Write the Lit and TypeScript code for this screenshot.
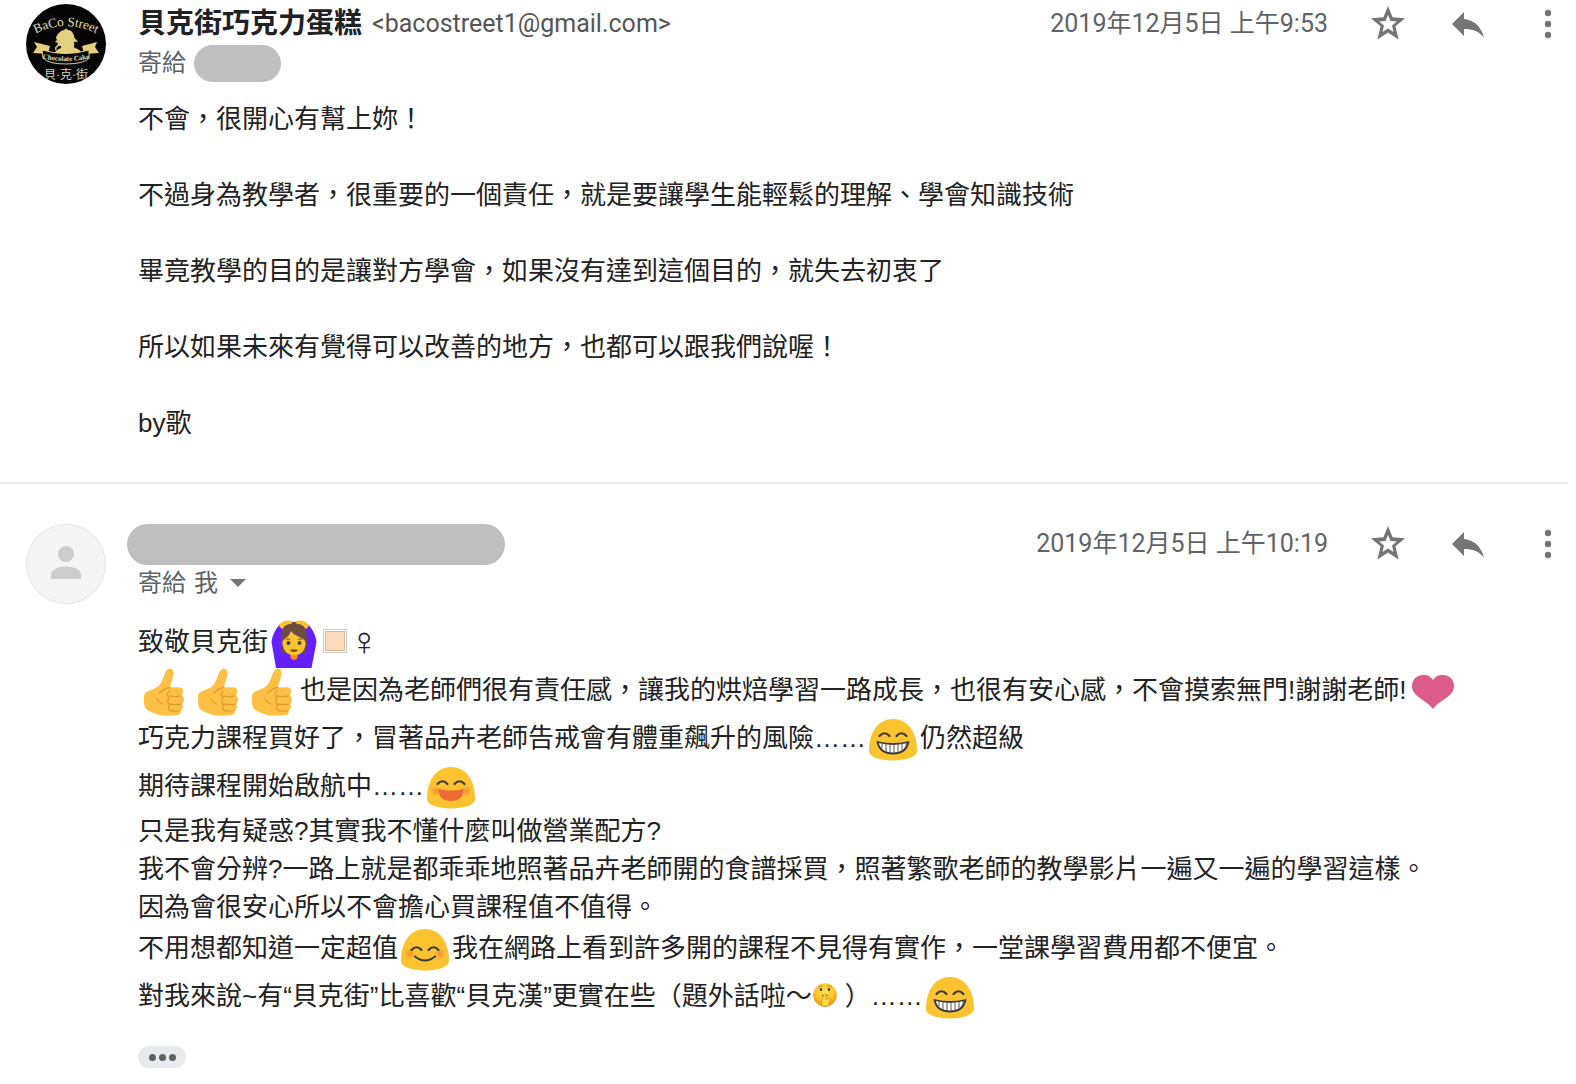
import { LitElement, html, css, svg, nothing, type TemplateResult } from "lit";
import { customElement, property } from "lit/decorators.js";

type EmojiName = "thumb" | "grin" | "laugh" | "blush" | "heart" | "woman" | "shush" | "skin";

const BLOB = svg`<path fill="#fcc331" d="M24 3C38 3 48 15 48 35C48 41 37 44.500 24 44.500S0 41 0 35C0 15 10 3 24 3Z"/>`;

const eyes = (y: number) => svg`
  <path fill="none" stroke="#3b3a35" stroke-width="2.200" stroke-linecap="round"
    d="M10.500 ${y + 3}Q15.500 ${y - 2.5} 20.500 ${y + 3}M27.500 ${y + 3}Q32.500 ${y - 2.5} 37.500 ${y + 3}"/>`;

const cheeks = (y: number) => svg`
  <defs><radialGradient id="c"><stop offset="0.200" stop-color="#f78c3a" stop-opacity="0.850"/><stop offset="1" stop-color="#f9a03a" stop-opacity="0"/></radialGradient></defs>
  <circle cx="9" cy=${y} r="6" fill="url(#c)"/><circle cx="39" cy=${y} r="6" fill="url(#c)"/>`;

const ART: Record<EmojiName, { label: string; art: TemplateResult<2> }> = {
  grin: {
    label: "😁",
    art: svg`${BLOB}${eyes(17)}
      <path d="M8.500 26Q24 30 39.500 26Q37 37.500 24 37.500T8.500 26Z" fill="#fff" stroke="#3b3a35" stroke-width="1.800" stroke-linejoin="round"/>
      <path d="M13 27.500V32M17 28V36M21 28V37M25 28V37M29 28V37M33 28V35M37 27V31" stroke="#55534c" stroke-width="1"/>`,
  },
  laugh: {
    label: "😄",
    art: svg`${BLOB}${cheeks(27)}${eyes(17)}
      <path d="M11.500 25Q24 28 36.500 25Q36.500 37 24 37T11.500 25Z" fill="#f06a35"/>`,
  },
  blush: {
    label: "😊",
    art: svg`${BLOB}${cheeks(28)}${eyes(21)}
      <path d="M14 30.500Q24 38.500 34 30.500" fill="none" stroke="#3b3a35" stroke-width="2" stroke-linecap="round"/>`,
  },
  heart: {
    label: "❤",
    art: svg`<path fill="#db5b8b" d="M24 12C21 7 16 6.500 12 7.200C6 8.300 3 13 3 18C3 29 18 32 24 41C30 32 45 29 45 18C45 13 42 8.300 36 7.200C32 6.500 27 7 24 12Z"/>`,
  },
  thumb: {
    label: "👍",
    art: svg`<path fill="#fcc046" d="M26.500 1.500C29.500-0.300 33 1.500 32.500 6C32 11 29.500 15 29 19.500L38.500 19.300C43 19.500 43 25.500 40.500 27.500C44 29 43.800 34.500 40.800 36C43 38 42 42 39.500 42.500C40.500 45.500 38.500 47.300 35 47.300C25 48 18.500 47.800 14 45.500C9 44 4.500 42 3.500 38C2.700 34 2.800 30 3.200 27C3.800 22.500 14 22 18.500 17C22.500 12 23 4 26.500 1.500Z"/>
      <path fill="none" stroke="#e59b2b" stroke-width="1.300" stroke-linecap="round" d="M18.500 25C23 21 25 20 29 19.500M39.500 27.800C36 29 31 28.500 28.500 28M40 36C36 37 32 36.500 29 36M39 42.500C36 43.500 33 43.300 29.500 42.500M28 23C25.500 26 26 28 28 29.500C26 32 26.500 35 28.500 36.500C27 39 27.500 41 29 42.500M16 31C17.500 34 19 35 22 36"/>`,
  },
  woman: {
    label: "🙆",
    art: svg`<path fill="#651fff" d="M8.500 4.500L12 9L10 24L15 31H31L35.500 24L34 9L37.500 4.500C42 10 45 16 45.500 22L40.500 48H5L0.500 22C1 16 4 10 8.500 4.500Z"/>
      <path fill="#6d4c41" d="M11.500 33C9.500 24 9.500 14 12 8C15 2.500 19 2 23 2S31 2.500 34 8C36.500 14 36.500 24 34.500 33Z"/>
      <path fill="#fcc331" d="M8 6C11 0 17-0.500 22 1.500L20 4C16 4 12.500 6 11 9ZM38 6C35 0 29-0.500 24 1.500L26 4C30 4 33.500 6 35 9Z"/>
      <path fill="#fb8c00" d="M19.500 31H26.500V38Q23 42 19.500 38Z"/>
      <path fill="#fcc331" d="M11.500 23C11 19 17 19 20 11C23 17 34.500 17 34.500 23C34.500 30.500 29.500 35.500 23 35.500S12 30.500 11.500 23Z"/>
      <circle cx="17.500" cy="23" r="2" fill="#444"/><circle cx="28.500" cy="23" r="2" fill="#444"/>
      <path fill="none" stroke="#6d4c41" d="M15 19.500Q17 18 19 19.500M27 19.500Q29 18 31 19.500"/>
      <path fill="#7a4b1e" d="M19 29.500H27Q26 32 23 32T19 29.500Z"/>`,
  },
  skin: {
    label: "🏻",
    art: svg`<rect x="1" y="1" width="46" height="46" fill="#fff" stroke="#ccc" stroke-width="2"/>
      <rect x="5" y="5" width="38" height="38" fill="#fadcbc" stroke="#e6b38f" stroke-width="2"/>`,
  },
  shush: {
    label: "🤫",
    art: svg`<defs><radialGradient id="s" cx="0.500" cy="0.350" r="0.650"><stop offset="0" stop-color="#ffe94f"/><stop offset="0.600" stop-color="#fdc52d"/><stop offset="1" stop-color="#ee8a14"/></radialGradient></defs>
      <circle cx="24" cy="24" r="23.500" fill="url(#s)"/>
      <path fill="none" stroke="#c98524" stroke-width="2" stroke-linecap="round" d="M11 8Q15 4 19 6M29 6Q34 4 38 8"/>
      <ellipse cx="16" cy="13" rx="2.400" ry="3.400" fill="#6b3a10"/><ellipse cx="32" cy="13" rx="2.400" ry="3.400" fill="#6b3a10"/>
      <path fill="none" stroke="#b06a18" stroke-width="2" stroke-linecap="round" d="M18 25Q24 22 30 25"/>
      <path fill="#ffd54a" stroke="#dd8a1c" stroke-width="1.500" d="M21 23Q23.500 19 26 23L27 33L34 29Q37 30 34 34L32 44Q26 49 18 46L17 36Q20 32 21 23Z"/>`,
  },
};

@customElement("mail-emoji")
export class MailEmoji extends LitElement {
  @property() name: EmojiName = "grin";

  static styles = css`
    :host { display: inline-block; width: 48px; height: 48px; margin: 0 3px; vertical-align: middle; }
    :host([small]) { width: 24px; height: 24px; margin: 0 8px 0 1px; vertical-align: -2px; }
    .art { display: block; width: 100%; height: 100%; }
  `;

  render() {
    const { label, art } = ART[this.name];
    return html`<svg class="art" viewBox="0 0 48 48" role="img" aria-label=${label}>${art}</svg>`;
  }
}

@customElement("mail-avatar")
export class MailAvatar extends LitElement {
  @property() kind: "brand" | "person" = "person";

  static styles = css`
    :host { display: block; flex: none; width: 80px; height: 80px; }
    .art { display: block; width: 100%; height: 100%; }
    .latin { font-family: "Liberation Serif", serif; fill: #e9dfb4; }
    .arc { font-size: 13px; }
    .ribbon { font-size: 7px; font-weight: 700; }
    .han { font-family: "Liberation Serif", "Noto Sans CJK TC", serif; font-size: 12px; fill: #d8d3b4; }
  `;

  render() {
    return this.kind === "brand" ? this.brand() : this.person();
  }

  private person() {
    return html`<svg class="art" viewBox="0 0 80 80" aria-hidden="true">
      <circle cx="40" cy="40" r="39.500" fill="#f5f5f5" stroke="#e4e4e4"/>
      <circle cx="40" cy="30" r="8" fill="#ccc"/>
      <path d="M25 55V51C25 45.500 32 42.500 40 42.500S55 45.500 55 51V55Z" fill="#ccc"/>
    </svg>`;
  }

  private brand() {
    return html`<svg class="art" viewBox="0 0 80 80" aria-hidden="true">
      <circle cx="40" cy="40" r="40" fill="#050505"/>
      <path id="top" fill="none" d="M5 32Q40 12 75 32"/>
      <text class="latin arc" text-anchor="middle"><textPath href="#top" startOffset="50%">BaCo Street</textPath></text>
      <path fill="#e3cf7d" d="M30 34C31 30 34 27 38 26L40 24.500L42 26C46 26 48 30 48.500 34L52 37.500L48 38C49 41 47 43 49 44C53 45 55 47 56 50H28C29 47 32 45 35 44L35 42L31 42L32 39L29 38L31 36Z"/>
      <path fill="none" stroke="#e3cf7d" stroke-width="1.500" d="M32 42Q29 43 30 46"/>
      <path fill="#e3cf7d" d="M8 38L24 42L22 50L7 49L11 43ZM71 38L56 42L58 50L73 49L69 43Z"/>
      <path fill="#050505" stroke="#e3cf7d" d="M16 46Q40 53 63 46V54Q58 60 40 60T17 54Z"/>
      <path id="band" fill="none" d="M14 54Q40 60 66 54"/>
      <text class="latin ribbon" text-anchor="middle"><textPath href="#band" startOffset="50%">Chocolate Cake</textPath></text>
      <text class="han" x="40" y="75" text-anchor="middle">貝·克·街</text>
    </svg>`;
  }
}

/** One message of the thread: header row and slotted body. */
@customElement("mail-message")
export class MailMessage extends LitElement {
  @property() avatar: "brand" | "person" = "person";
  @property() sender = "";
  @property() email = "";
  @property() to = "";
  @property() date = "";

  static styles = css`
    :host { display: block; }
    .message { display: flex; gap: 32px; }
    .main { flex: 1; min-width: 0; }
    .header { display: flex; justify-content: space-between; height: 80px; line-height: 40px; }
    .row { display: flex; align-items: center; gap: 8px; height: 38px; white-space: nowrap; }
    .title { gap: 10px; height: 40px; }
    .name { margin: 0; font-size: 28px; font-weight: 700; color: #202124; }
    .email { font-size: 25px; color: #555; }
    .to { font-size: 24px; color: #5f6368; }
    .hidden-name { width: 378px; height: 41px; margin-left: -11px; border-radius: 21px; background: #bfbfbf; }
    .hidden-to { width: 87px; height: 37px; border-radius: 19px; background: #bfbfbf; }
    .meta { display: flex; align-items: center; gap: 40px; height: 40px; }
    .date { font-size: 25px; color: #5f6368; white-space: nowrap; }
    .icon-button { display: flex; align-items: center; justify-content: center; width: 40px; height: 40px; padding: 0; border: 0; background: none; }
    .caret { display: flex; align-items: center; justify-content: center; width: 24px; height: 24px; padding: 0; border: 0; background: none; }
    .icon { display: block; width: 40px; height: 40px; fill: #757575; }
    .caret-icon { display: block; width: 16px; height: 8px; fill: #757575; }
    .body { margin-top: 16px; font-size: 26px; line-height: 38px; color: #222; }
  `;

  render() {
    return html`<article class="message">
      <mail-avatar kind=${this.avatar}></mail-avatar>
      <div class="main">
        <header class="header">
          <div class="who">
            <div class="row title">
              ${this.sender
                ? html`<h3 class="name">${this.sender}</h3><span class="email">&lt;${this.email}&gt;</span>`
                : html`<span class="hidden-name"></span>`}
            </div>
            <div class="row">
              <span class="to">寄給</span>
              ${this.to ? html`<span class="to">${this.to}</span>` : nothing}
              ${this.to
                ? html`<button class="caret" aria-label="顯示詳細資料"><svg class="caret-icon" viewBox="0 0 16 8"><path d="M0 0H16L8 8Z"/></svg></button>`
                : html`<span class="hidden-to"></span>`}
            </div>
          </div>
          <div class="meta">
            <time class="date">${this.date}</time>
            <button class="icon-button" aria-label="加上星號">
              <svg class="icon" viewBox="0 0 40 40"><path fill-rule="evenodd" d="M20 2L24.600 13.300L37 14.300L27.500 22.300L30.500 35.500L20 28.600L9.500 35.500L12.500 22.300L3 14.300L15.400 13.300ZM20 11L17.500 17L11.200 17.500L16 21.600L14.500 28L20 24.500L25.500 28L24 21.600L28.800 17.500L22.500 17Z"/></svg>
            </button>
            <button class="icon-button" aria-label="回覆">
              <svg class="icon" viewBox="0 0 40 40"><path d="M16 15V8L4 20L16 32V25C25 25 31 27 36 34C34 25 28 16 16 15Z"/></svg>
            </button>
            <button class="icon-button" aria-label="更多">
              <svg class="icon" viewBox="0 0 40 40"><circle cx="20" cy="9" r="3.200"/><circle cx="20" cy="20" r="3.200"/><circle cx="20" cy="31" r="3.200"/></svg>
            </button>
          </div>
        </header>
        <div class="body"><slot></slot></div>
      </div>
    </article>`;
  }
}

@customElement("app-root")
export class AppRoot extends LitElement {
  static styles = css`
    :host { display: block; min-height: 100vh; background: #fff; font-family: Roboto, "Noto Sans CJK TC", sans-serif; }
    .first { padding: 4px 8px 40px 26px; }
    .second { padding: 40px 8px 16px 26px; }
    .divider { height: 2px; margin: 0 8px 0 0; border: 0; background: #ebebeb; }
    .text { font-family: "Liberation Sans", "Noto Sans CJK TC", sans-serif; }
    .line { margin: 0 0 38px; }
    .line:last-child { margin-bottom: 0; }
    .venus { display: inline-block; width: 20px; margin-left: -6px; font-family: "Liberation Serif", serif; font-size: 40px; line-height: 0; vertical-align: -4px; }
    .trimmed { display: flex; align-items: center; justify-content: center; gap: 3px; width: 48px; height: 22px; margin-top: 24px; padding: 0; border: 0; border-radius: 11px; background: #e8eaed; }
    .dot { width: 7px; height: 7px; border-radius: 50%; background: #616161; }
  `;

  render() {
    const e = (name: EmojiName) => html`<mail-emoji name=${name}></mail-emoji>`;
    return html`<main lang="zh-Hant">
      <mail-message class="first" avatar="brand" sender="貝克街巧克力蛋糕" email="bacostreet1@gmail.com" date="2019年12月5日 上午9:53">
        <div class="text">
          <p class="line">不會，很開心有幫上妳！</p>
          <p class="line">不過身為教學者，很重要的一個責任，就是要讓學生能輕鬆的理解、學會知識技術</p>
          <p class="line">畢竟教學的目的是讓對方學會，如果沒有達到這個目的，就失去初衷了</p>
          <p class="line">所以如果未來有覺得可以改善的地方，也都可以跟我們說喔！</p>
          <p class="line">by歌</p>
        </div>
      </mail-message>
      <hr class="divider" />
      <mail-message class="second" to="我" date="2019年12月5日 上午10:19">
        <div class="text">
          <div>致敬貝克街${e("woman")}<mail-emoji name="skin" small></mail-emoji><span class="venus">♀</span></div>
          <div>${e("thumb")}${e("thumb")}${e("thumb")}也是因為老師們很有責任感，讓我的烘焙學習一路成長，也很有安心感，不會摸索無門!謝謝老師!${e("heart")}</div>
          <div>巧克力課程買好了，冒著品卉老師告戒會有體重飆升的風險……${e("grin")}仍然超級</div>
          <div>期待課程開始啟航中……${e("laugh")}</div>
          <div>只是我有疑惑?其實我不懂什麼叫做營業配方?</div>
          <div>我不會分辨?一路上就是都乖乖地照著品卉老師開的食譜採買，照著繁歌老師的教學影片一遍又一遍的學習這樣。</div>
          <div>因為會很安心所以不會擔心買課程值不值得。</div>
          <div>不用想都知道一定超值${e("blush")}我在網路上看到許多開的課程不見得有實作，一堂課學習費用都不便宜。</div>
          <div>對我來說~有“貝克街”比喜歡“貝克漢”更實在些（題外話啦～<mail-emoji name="shush" small></mail-emoji>）……${e("grin")}</div>
        </div>
        <button class="trimmed" aria-label="顯示刪節內容"><span class="dot"></span><span class="dot"></span><span class="dot"></span></button>
      </mail-message>
    </main>`;
  }
}
